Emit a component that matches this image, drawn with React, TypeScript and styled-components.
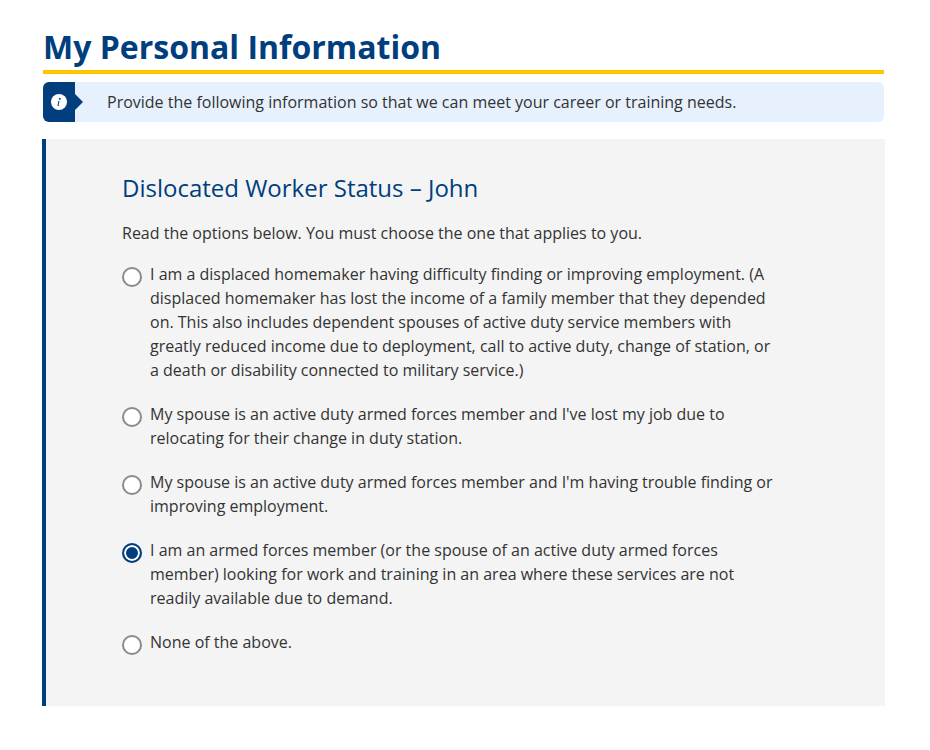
import React from "react";
import styled, { createGlobalStyle } from "styled-components";

const Global = createGlobalStyle`
  html, body { margin: 0; padding: 0; background: #fff; }
  body { font-family: "Open Sans", "Noto Sans", sans-serif; color: #333; }
  * { box-sizing: border-box; }
`;

const Page = styled.main`
  width: 930px;
  height: 750px;
  padding: 27px 45px 0 42px;
  overflow: hidden;
`;

const Header = styled.header`
  margin-left: 1px;
  margin-right: 1px;
  border-bottom: 4px solid #ffc600;
`;

const Title = styled.h1`
  margin: 0;
  padding-bottom: 4px;
  font-size: 32px;
  line-height: 39px;
  font-weight: 700;
  color: #003e7e;
`;

const Alert = styled.div`
  margin: 8px 1px 0;
  height: 40px;
  display: flex;
  align-items: center;
  background: #e6f1fd;
  border-radius: 6px;
`;

const AlertIcon = styled.div`
  position: relative;
  flex: none;
  width: 32px;
  height: 40px;
  background: #003e7e;
  border-radius: 6px 0 0 6px;
  display: flex;
  align-items: center;
  justify-content: center;
  &::after {
    content: "";
    position: absolute;
    right: -8px;
    top: 12px;
    border-left: 8px solid #003e7e;
    border-top: 8px solid transparent;
    border-bottom: 8px solid transparent;
  }
`;

const AlertText = styled.p`
  margin: 0 0 0 32px;
  font-size: 16px;
  line-height: 24px;
`;

const Panel = styled.section`
  margin-top: 17px;
  height: 567px;
  background: #f4f4f4;
  border-left: 4px solid #003e7e;
  padding: 31px 112px 0 76px;
`;

const Heading = styled.h2`
  margin: 0;
  font-size: 24px;
  line-height: 36px;
  font-weight: 400;
  color: #003e7e;
`;

const Lead = styled.p`
  margin: 15px 0 0;
  font-size: 16px;
  line-height: 24px;
`;

const Options = styled.div`
  margin-top: 17px;
  display: flex;
  flex-direction: column;
  gap: 20px;
`;

const Option = styled.label`
  display: flex;
  align-items: flex-start;
  font-size: 16px;
  line-height: 24px;
`;

const Radio = styled.span<{ $checked?: boolean }>`
  flex: none;
  width: 20px;
  height: 20px;
  margin: 5px 8px 0 0;
  border-radius: 50%;
  background: ${(p) => (p.$checked ? "#003e7e" : "#fff")};
  border: 2px solid ${(p) => (p.$checked ? "#003e7e" : "#8a8a8a")};
  box-shadow: ${(p) => (p.$checked ? "inset 0 0 0 2px #fff" : "none")};
`;

const options = [
  "I am a displaced homemaker having difficulty finding or improving employment. (A displaced homemaker has lost the income of a family member that they depended on. This also includes dependent spouses of active duty service members with greatly reduced income due to deployment, call to active duty, change of station, or a death or disability connected to military service.)",
  "My spouse is an active duty armed forces member and I've lost my job due to relocating for their change in duty station.",
  "My spouse is an active duty armed forces member and I'm having trouble finding or improving employment.",
  "I am an armed forces member (or the spouse of an active duty armed forces member) looking for work and training in an area where these services are not readily available due to demand.",
  "None of the above.",
];

export default function App() {
  return (
    <Page>
      <Global />
      <Header>
        <Title>My Personal Information</Title>
      </Header>
      <Alert>
        <AlertIcon>
          <svg width="16" height="16" viewBox="0 0 16 16" aria-hidden="true">
            <circle cx="8" cy="8" r="8" fill="#fff" />
            <circle cx="8.8" cy="4.7" r="0.95" fill="#003e7e" />
            <path d="M6.8 7.4 L8.6 7.1 L7.6 11 Q7.5 11.5 8.3 11 L8.5 11.3 Q7.6 12.1 6.9 12 Q6.3 11.9 6.5 11.1 L7.2 8.2 Q7.3 7.7 6.7 7.7 Z" fill="#003e7e" />
          </svg>
        </AlertIcon>
        <AlertText>Provide the following information so that we can meet your career or training needs.</AlertText>
      </Alert>
      <Panel>
        <Heading>Dislocated Worker Status – John</Heading>
        <Lead>Read the options below. You must choose the one that applies to you.</Lead>
        <Options>
          {options.map((text, i) => (
            <Option key={i}>
              <Radio $checked={i === 3} />
              <span>{text}</span>
            </Option>
          ))}
        </Options>
      </Panel>
    </Page>
  );
}
